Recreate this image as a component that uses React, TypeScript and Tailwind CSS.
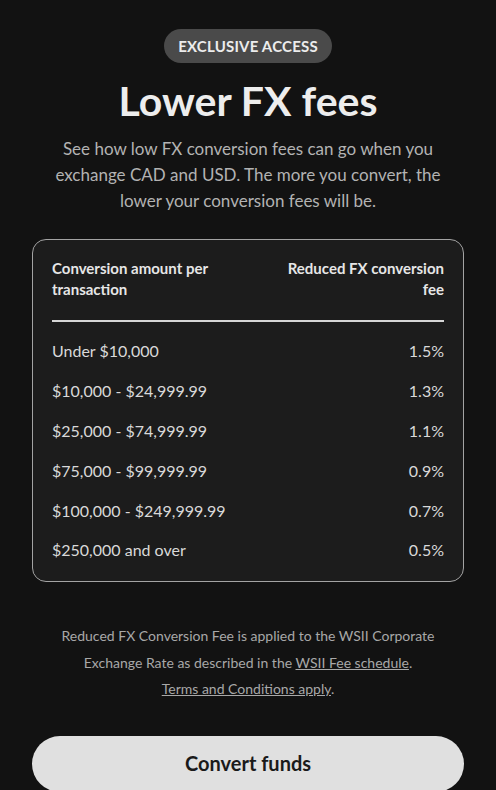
import React from "react";

const rows: [string, string][] = [
  ["Under $10,000", "1.5%"],
  ["$10,000 - $24,999.99", "1.3%"],
  ["$25,000 - $74,999.99", "1.1%"],
  ["$75,000 - $99,999.99", "0.9%"],
  ["$100,000 - $249,999.99", "0.7%"],
  ["$250,000 and over", "0.5%"],
];

export default function App() {
  return (
    <div
      className="w-[496px] h-[790px] overflow-hidden bg-[#121212] flex flex-col items-center"
      style={{ fontFamily: "Lato, 'Noto Sans', sans-serif" }}
    >
      <div className="shrink-0 mt-[29px] h-[34px] px-[14px] rounded-full bg-[#4a4a4a] flex items-center text-[15px] font-bold tracking-[0.2px] text-[#ececec]">
        EXCLUSIVE ACCESS
      </div>
      <h1 className="shrink-0 mt-[16px] text-[41px] leading-[44px] font-bold text-[#ededed]">Lower FX fees</h1>
      <p className="shrink-0 mt-[13px] w-[400px] text-center text-[17px] leading-[26px] text-[#b3b3b3]">
        See how low FX conversion fees can go when you exchange CAD and USD. The more you convert, the lower your conversion fees will be.
      </p>
      <div className="shrink-0 mt-[25px] w-[432px] rounded-[14px] border-[1.5px] border-[#a3a3a3] bg-[#1c1c1c] px-[19px] pt-[18px] pb-[11px]">
        <div className="flex justify-between text-[15px] leading-[21px] font-bold text-[#e6e6e6]">
          <div className="w-[190px]">Conversion amount per transaction</div>
          <div className="w-[168px] text-right">Reduced FX conversion fee</div>
        </div>
        <div className="mt-[20px] h-[1.5px] bg-[#d6d6d6]" />
        <div className="mt-[10px] flex flex-col">
          {rows.map(([a, b]) => (
            <div key={a} className="h-[39.8px] flex items-center justify-between text-[16px] text-[#d9d9d9]">
              <span>{a}</span>
              <span>{b}</span>
            </div>
          ))}
        </div>
      </div>
      <div className="shrink-0 mt-[41px] w-[400px] text-center text-[14px] leading-[26.5px] text-[#a8a8a8]">
        Reduced FX Conversion Fee is applied to the WSII Corporate Exchange Rate as described in the{" "}
        <span className="underline">WSII Fee schedule</span>.
        <br />
        <span className="underline">Terms and Conditions apply</span>.
      </div>
      <button className="shrink-0 mt-[33px] w-[432px] h-[56px] rounded-full bg-[#e0e0e0] text-[20px] font-bold text-[#1a1a1a] flex items-center justify-center pb-[2px]">
        Convert funds
      </button>
    </div>
  );
}
